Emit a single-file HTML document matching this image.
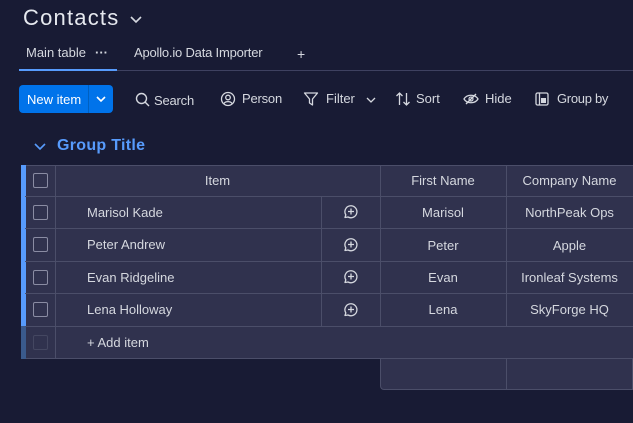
<!DOCTYPE html>
<html><head><style>
*{margin:0;padding:0;box-sizing:border-box}
body{width:633px;height:423px;background:#181b34;font-family:"Liberation Sans",sans-serif;color:#d5d8df;position:relative;overflow:hidden;font-size:13px}
.a{position:absolute}
.t{position:absolute;white-space:nowrap}
.cb{position:absolute;width:15px;height:15px;border:1px solid #8a8ca3;border-radius:2px}
.h{position:absolute;height:1px;background:#4b4e69}
.v{position:absolute;width:1px;background:#4b4e69}
svg{position:absolute}
</style></head><body>
<div class="t" style="left:23px;top:5px;font-size:22px;color:#e6e9ef;letter-spacing:1.2px">Contacts</div>
<svg style="left:129px;top:14px" width="14" height="10"><path d="M2 3l5 5 5-5" stroke="#d5d8df" stroke-width="1.6" fill="none"/></svg>
<div class="t" style="left:26px;top:45px;font-size:13px">Main table</div>
<div class="t" style="left:95px;top:45px;font-size:13px;font-weight:bold">···</div>
<div class="t" style="left:134px;top:45px;font-size:13px;letter-spacing:-0.2px">Apollo.io Data Importer</div>
<div class="t" style="left:297px;top:46px;font-size:14px">+</div>
<div class="h" style="left:19px;top:70px;width:614px;background:#3e4160"></div>
<div class="a" style="left:19px;top:69px;width:98px;height:2px;background:#579bfc"></div>

<div class="a" style="left:19px;top:85px;width:94px;height:28px;background:#0073ea;border-radius:4px"></div>
<div class="a" style="left:88px;top:85px;width:1px;height:28px;background:#0060c0"></div>
<div class="t" style="left:27px;top:92px;color:#fff">New item</div>
<svg style="left:95px;top:95px" width="12" height="8"><path d="M2 2l4 4 4-4" stroke="#fff" stroke-width="1.6" fill="none"/></svg>

<svg style="left:135px;top:92px" width="16" height="16"><circle cx="6.5" cy="6.5" r="5" stroke="#d5d8df" stroke-width="1.4" fill="none"/><path d="M10 10l4 4" stroke="#d5d8df" stroke-width="1.4"/></svg>
<div class="t" style="left:154px;top:93px;letter-spacing:-0.2px">Search</div>
<svg style="left:220px;top:91px" width="16" height="16"><circle cx="8" cy="8" r="6.5" stroke="#d5d8df" stroke-width="1.3" fill="none"/><circle cx="8" cy="6.5" r="2.3" stroke="#d5d8df" stroke-width="1.3" fill="none"/><path d="M4 12.5c1.5-2.5 6.5-2.5 8 0" stroke="#d5d8df" stroke-width="1.3" fill="none"/></svg>
<div class="t" style="left:242px;top:91px;letter-spacing:-0.2px">Person</div>
<svg style="left:303px;top:91px" width="16" height="16"><path d="M1.5 2h13l-5 6v6l-3-2V8z" stroke="#d5d8df" stroke-width="1.3" fill="none" stroke-linejoin="round"/></svg>
<div class="t" style="left:326px;top:91px">Filter</div>
<svg style="left:366px;top:96px" width="10" height="8"><path d="M1 2l4 4 4-4" stroke="#d5d8df" stroke-width="1.3" fill="none"/></svg>
<svg style="left:395px;top:91px" width="16" height="16"><path d="M4.5 14V2M1.5 5l3-3 3 3M11.5 2v12M8.5 11l3 3 3-3" stroke="#d5d8df" stroke-width="1.3" fill="none"/></svg>
<div class="t" style="left:416px;top:91px">Sort</div>
<svg style="left:463px;top:93px" width="16" height="12"><path d="M1 6c3-5 11-5 14 0c-3 5-11 5-14 0z" stroke="#d5d8df" stroke-width="1.3" fill="none"/><circle cx="8" cy="6" r="2" stroke="#d5d8df" stroke-width="1.2" fill="none"/><path d="M3 11L13 1" stroke="#d5d8df" stroke-width="1.3"/></svg>
<div class="t" style="left:485px;top:91px">Hide</div>
<svg style="left:535px;top:92px" width="15" height="15"><rect x="1" y="1" width="12" height="12" rx="1.5" stroke="#d5d8df" stroke-width="1.3" fill="none"/><path d="M4.5 1v12" stroke="#d5d8df" stroke-width="1.3"/><rect x="6" y="6" width="5" height="5" fill="#d5d8df"/></svg>
<div class="t" style="left:557px;top:91px;letter-spacing:-0.3px">Group by</div>

<svg style="left:34px;top:142px" width="12" height="9"><path d="M1 2l5 5 5-5" stroke="#579bfc" stroke-width="1.6" fill="none"/></svg>
<div class="t" style="left:57px;top:137px;font-size:16px;font-weight:bold;color:#579bfc;letter-spacing:0.3px">Group Title</div>

<div class="a" style="left:380px;top:326px;width:253px;height:64px;background:#30324e;border:1px solid #4b4e69;border-top:none;border-radius:0 0 0 4px"></div>
<div class="v" style="left:506px;top:326px;height:64px"></div>
<div class="a" style="left:21px;top:165px;width:612px;height:194px;background:#30324e;border:1px solid #4b4e69;border-right:none"></div>
<div class="a" style="left:21px;top:165px;width:5px;height:162px;background:#579bfc"></div>
<div class="a" style="left:21px;top:326px;width:5px;height:33px;background:#3a5a8c"></div>
<div class="h" style="left:25px;top:196px;width:608px"></div>
<div class="h" style="left:25px;top:228px;width:608px"></div>
<div class="h" style="left:25px;top:261px;width:608px"></div>
<div class="h" style="left:25px;top:293px;width:608px"></div>
<div class="h" style="left:25px;top:326px;width:608px"></div>
<div class="v" style="left:55px;top:165px;height:194px"></div>
<div class="v" style="left:321px;top:196px;height:130px"></div>
<div class="v" style="left:380px;top:165px;height:161px"></div>
<div class="v" style="left:506px;top:165px;height:161px"></div>

<div class="cb" style="left:33px;top:173px"></div>
<div class="cb" style="left:33px;top:205px"></div>
<div class="cb" style="left:33px;top:237px"></div>
<div class="cb" style="left:33px;top:270px"></div>
<div class="cb" style="left:33px;top:302px"></div>
<div class="cb" style="left:33px;top:335px;border-color:#444761"></div>

<div class="t" style="left:55px;width:325px;text-align:center;top:173px">Item</div>
<div class="t" style="left:380px;width:126px;text-align:center;top:173px">First Name</div>
<div class="t" style="left:506px;width:127px;text-align:center;top:173px">Company Name</div>

<div class="t" style="left:87px;top:205px">Marisol Kade</div>
<div class="t" style="left:87px;top:237px">Peter Andrew</div>
<div class="t" style="left:87px;top:270px">Evan Ridgeline</div>
<div class="t" style="left:87px;top:302px">Lena Holloway</div>
<div class="t" style="left:87px;top:335px">+ Add item</div>

<div class="t" style="left:380px;width:126px;text-align:center;top:205px">Marisol</div>
<div class="t" style="left:380px;width:126px;text-align:center;top:238px">Peter</div>
<div class="t" style="left:380px;width:126px;text-align:center;top:270px">Evan</div>
<div class="t" style="left:380px;width:126px;text-align:center;top:302px">Lena</div>
<div class="t" style="left:506px;width:127px;text-align:center;top:205px">NorthPeak Ops</div>
<div class="t" style="left:506px;width:127px;text-align:center;top:238px">Apple</div>
<div class="t" style="left:506px;width:127px;text-align:center;top:270px">Ironleaf Systems</div>
<div class="t" style="left:506px;width:127px;text-align:center;top:302px">SkyForge HQ</div>

<svg style="left:342px;top:204px" width="16" height="16"><path d="M3 13.5l0.8-2.6A6 6 0 1 1 6 13z" stroke="#d5d8df" stroke-width="1.3" fill="none" stroke-linejoin="round"/><path d="M9 4.5v6M6 7.5h6" stroke="#d5d8df" stroke-width="1.3"/></svg>
<svg style="left:342px;top:237px" width="16" height="16"><path d="M3 13.5l0.8-2.6A6 6 0 1 1 6 13z" stroke="#d5d8df" stroke-width="1.3" fill="none" stroke-linejoin="round"/><path d="M9 4.5v6M6 7.5h6" stroke="#d5d8df" stroke-width="1.3"/></svg>
<svg style="left:342px;top:269px" width="16" height="16"><path d="M3 13.5l0.8-2.6A6 6 0 1 1 6 13z" stroke="#d5d8df" stroke-width="1.3" fill="none" stroke-linejoin="round"/><path d="M9 4.5v6M6 7.5h6" stroke="#d5d8df" stroke-width="1.3"/></svg>
<svg style="left:342px;top:302px" width="16" height="16"><path d="M3 13.5l0.8-2.6A6 6 0 1 1 6 13z" stroke="#d5d8df" stroke-width="1.3" fill="none" stroke-linejoin="round"/><path d="M9 4.5v6M6 7.5h6" stroke="#d5d8df" stroke-width="1.3"/></svg>
</body></html>
